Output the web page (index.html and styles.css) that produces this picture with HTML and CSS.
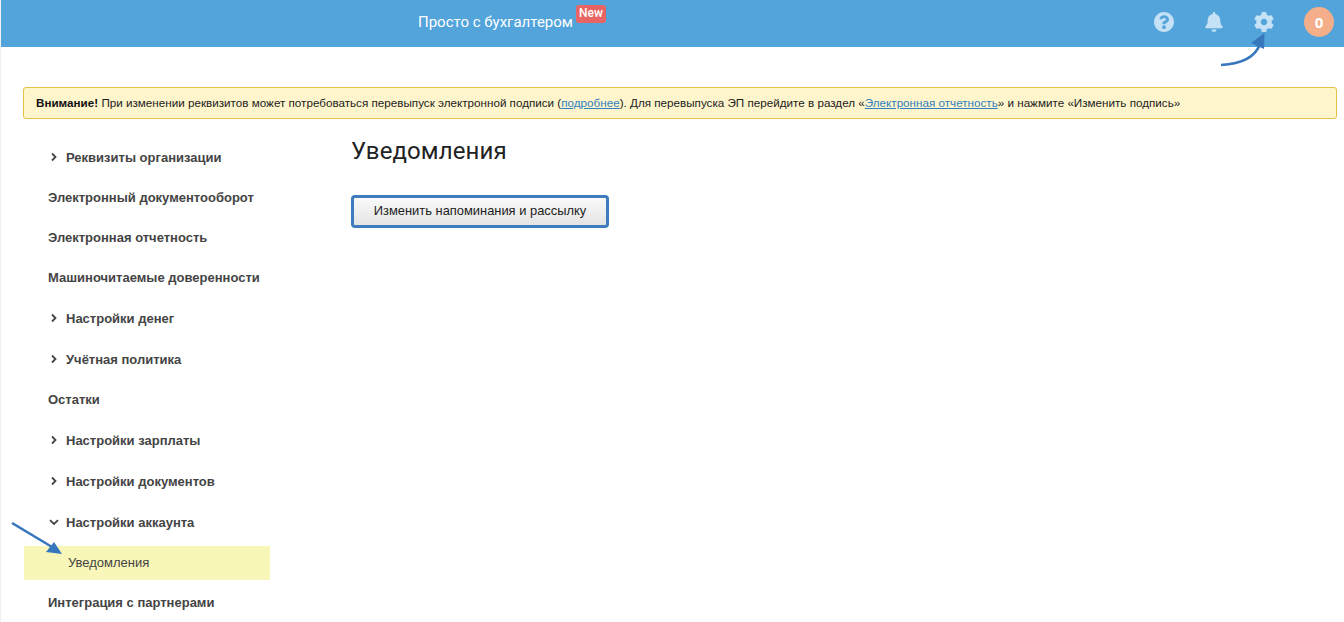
FILE: index.html
```html
<!DOCTYPE html>
<html lang="ru">
<head>
<meta charset="utf-8">
<title>Уведомления</title>
<link rel="stylesheet" href="styles.css">
</head>
<body>
<header class="topbar">
  <div class="brand"><span class="brand-text">Просто с бухгалтером</span><span class="badge">New</span></div>
  <div class="tools">
    <svg class="tool tool-help" viewBox="8 8 496 496" width="20" height="20"><path fill="#c5e1f5" d="M504 256c0 136.997-111.043 248-248 248S8 392.997 8 256C8 119.083 119.043 8 256 8s248 111.083 248 248zM262.655 90c-54.497 0-89.255 22.957-116.549 63.758-3.536 5.286-2.353 12.415 2.715 16.258l34.699 26.31c5.205 3.947 12.621 3.008 16.665-2.122 17.864-22.658 30.113-35.797 57.303-35.797 20.429 0 45.698 13.148 45.698 32.958 0 14.976-12.363 22.667-32.534 33.976C247.128 238.528 216 254.941 216 296v4c0 6.627 5.373 12 12 12h56c6.627 0 12-5.373 12-12v-1.333c0-28.462 83.186-29.647 83.186-106.667 0-58.002-60.165-102-116.531-102zM256 338c-25.365 0-46 20.635-46 46 0 25.364 20.635 46 46 46s46-20.636 46-46c0-25.365-20.635-46-46-46z"/></svg>
    <svg class="tool tool-bell" viewBox="0 0 448 512" width="18" height="20"><path fill="#c5e1f5" d="M224 512c35.32 0 63.97-28.65 63.97-64H160.03c0 35.35 28.65 64 63.97 64zm215.39-149.71c-19.32-20.76-55.47-51.99-55.47-154.29 0-77.7-54.48-139.9-127.94-155.16V32c0-17.67-14.32-32-31.98-32s-31.98 14.33-31.98 32v20.84C118.56 68.1 64.08 130.3 64.08 208c0 102.3-36.15 133.53-55.47 154.29-6 6.45-8.66 14.16-8.61 21.71.11 16.4 12.98 32 32.1 32h383.8c19.12 0 32-15.6 32.1-32 .05-7.55-2.61-15.27-8.61-21.71z"/></svg>
    <svg class="tool tool-gear" viewBox="8 8 496 496" width="20" height="20"><path fill="#c5e1f5" d="M487.4 315.7l-42.6-24.6c4.3-23.2 4.3-47 0-70.2l42.6-24.6c4.9-2.8 7.1-8.6 5.5-14-11.1-35.6-30-67.8-54.7-94.6-3.8-4.1-10-5.1-14.8-2.3L380.8 110c-17.9-15.4-38.5-27.3-60.8-35.1V25.800c0-5.6-3.9-10.500-9.4-11.700-36.700-8.200-74.300-7.800-109.200 0-5.500 1.200-9.400 6.100-9.400 11.700V75c-22.200 7.900-42.800 19.800-60.800 35.100L88.700 85.500c-4.900-2.800-11-1.900-14.800 2.300-24.700 26.700-43.600 58.900-54.700 94.600-1.700 5.400.6 11.200 5.500 14L67.300 221c-4.300 23.200-4.300 47 0 70.200l-42.600 24.600c-4.900 2.800-7.100 8.600-5.500 14 11.100 35.600 30 67.800 54.700 94.600 3.800 4.100 10 5.100 14.800 2.300l42.600-24.600c17.900 15.400 38.500 27.300 60.800 35.100v49.200c0 5.600 3.900 10.500 9.400 11.700 36.700 8.200 74.300 7.800 109.200 0 5.500-1.200 9.400-6.100 9.400-11.700v-49.200c22.200-7.900 42.800-19.800 60.800-35.100l42.600 24.600c4.900 2.800 11 1.900 14.800-2.300 24.700-26.700 43.600-58.900 54.700-94.600 1.500-5.500-.7-11.300-5.600-14.100zM256 336c-44.100 0-80-35.900-80-80s35.900-80 80-80 80 35.900 80 80-35.900 80-80 80z"/></svg>
    <div class="avatar">0</div>
  </div>
</header>
<svg class="arrow arrow-gear" viewBox="0 0 60 50" width="60" height="50"><path d="M1 38C20 37 35 31 40 17" fill="none" stroke="#3677bd" stroke-width="2.500"/><path d="M44.500 6 44 22 31 16z" fill="#3677bd"/></svg>
<main class="page">
  <div class="notice"><b>Внимание!</b> При изменении реквизитов может потребоваться перевыпуск электронной подписи (<a href="#">подробнее</a>). Для перевыпуска ЭП перейдите в раздел «<a href="#">Электронная отчетность</a>» и нажмите «Изменить подпись»</div>
  <div class="columns">
    <nav class="side">
      <a class="item exp"><svg class="chev" viewBox="0 0 8 10" width="8" height="10"><path d="M2 1.500 5.500 5 2 8.500" fill="none" stroke="#444" stroke-width="1.800"/></svg>Реквизиты организации</a>
      <a class="item">Электронный документооборот</a>
      <a class="item">Электронная отчетность</a>
      <a class="item">Машиночитаемые доверенности</a>
      <a class="item exp"><svg class="chev" viewBox="0 0 8 10" width="8" height="10"><path d="M2 1.500 5.500 5 2 8.500" fill="none" stroke="#444" stroke-width="1.800"/></svg>Настройки денег</a>
      <a class="item exp"><svg class="chev" viewBox="0 0 8 10" width="8" height="10"><path d="M2 1.500 5.500 5 2 8.500" fill="none" stroke="#444" stroke-width="1.800"/></svg>Учётная политика</a>
      <a class="item">Остатки</a>
      <a class="item exp"><svg class="chev" viewBox="0 0 8 10" width="8" height="10"><path d="M2 1.500 5.500 5 2 8.500" fill="none" stroke="#444" stroke-width="1.800"/></svg>Настройки зарплаты</a>
      <a class="item exp"><svg class="chev" viewBox="0 0 8 10" width="8" height="10"><path d="M2 1.500 5.500 5 2 8.500" fill="none" stroke="#444" stroke-width="1.800"/></svg>Настройки документов</a>
      <a class="item exp"><svg class="chev chev-open" viewBox="0 0 10 10" width="10" height="10"><path d="M1 3.200 5 7 9 3.200" fill="none" stroke="#444" stroke-width="1.800"/></svg>Настройки аккаунта</a>
      <a class="sub">Уведомления</a>
      <a class="item last">Интеграция с партнерами</a>
    </nav>
    <section class="content">
      <h1 class="title">Уведомления</h1>
      <button class="btn" type="button">Изменить напоминания и рассылку</button>
    </section>
  </div>
</main>
<svg class="arrow arrow-nav" viewBox="0 0 60 50" width="60" height="50"><path d="M1 1 41 25" fill="none" stroke="#3677bd" stroke-width="2.500"/><path d="M51 32 35 30 43 20z" fill="#3677bd"/></svg>
</body>
</html>
```
FILE: styles.css
```css
* { box-sizing: border-box; }
html, body { margin: 0; height: 100%; }
body {
  position: relative;
  height: 622px;
  overflow: hidden;
  background: #fff;
  font-family: "Liberation Sans", Arial, sans-serif;
  color: #333;
  border-left: 1px solid #eef1f4;
}
.topbar {
  height: 47px;
  margin-left: -1px;
  background: #52a4db;
  display: flex;
  align-items: center;
  justify-content: space-between;
  padding: 0 10px 3px 418px;
}
.brand { display: flex; align-items: flex-start; color: #fff; }
.brand-text { font: 400 15px/20px Roboto, sans-serif; }
.badge {
  margin-left: 3px;
  margin-top: -7px;
  width: 30px;
  height: 18px;
  border-radius: 3px;
  background: #e96464;
  color: #fff;
  font: 500 12px/16px Roboto, sans-serif;
  text-align: center;
}
.tools { display: flex; align-items: center; }
.tool { display: block; flex: none; }
.tool-help { margin-right: 31px; }
.tool-bell { margin-right: 31px; }
.tool-gear { margin-right: 30px; }
.avatar {
  width: 30px;
  height: 30px;
  border-radius: 50%;
  background: #f4ae8a;
  color: #fff;
  font: 700 15px/30px "Open Sans", sans-serif;
  text-align: center;
}
.page { padding: 40px 7px 0 22px; }
.notice {
  height: 32px;
  border: 1px solid #e5c243;
  border-radius: 3px;
  background: #fff5cc;
  padding: 0 12px;
  font-size: 11.66px;
  line-height: 30px;
  color: #222;
  white-space: nowrap;
}
.notice b { color: #111; }
.notice a { color: #2f7fc1; text-decoration: underline; }
.columns { display: flex; margin-top: 17px; padding-left: 1px; }
.side { width: 246px; flex: none; display: flex; flex-direction: column; }
.item {
  height: 40px;
  display: flex;
  align-items: center;
  padding-left: 24px;
  font-size: 13px;
  font-weight: 700;
  color: #444;
}
.item.exp { height: 41px; padding-top: 1px; }
.chev { flex: none; margin-right: 8px; margin-left: 2px; }
.chev-open { margin-left: 1px; margin-right: 7px; }
.sub {
  height: 34px;
  margin-top: 4px;
  background: #f8f6b8;
  padding-left: 44px;
  font-size: 13px;
  line-height: 34px;
  color: #444;
}
.item.last { margin-top: 2px; }
.content { margin-left: 81px; }
.title {
  margin: 0;
  font: 400 24px/30px Roboto, sans-serif;
  letter-spacing: .1px;
  color: #222;
}
.btn {
  display: block;
  width: 258px;
  height: 33px;
  margin-top: 29px;
  border: 3px solid #3f7cbd;
  border-radius: 4px;
  background: linear-gradient(#fafafa, #e4e4e4);
  font: 400 12.9px/1 "Liberation Sans", Arial, sans-serif;
  color: #222;
  padding: 0;
}
.arrow { position: absolute; display: block; z-index: 2; }
.arrow-gear { left: 1219px; top: 27px; }
.arrow-nav { left: 10px; top: 522px; }
```
